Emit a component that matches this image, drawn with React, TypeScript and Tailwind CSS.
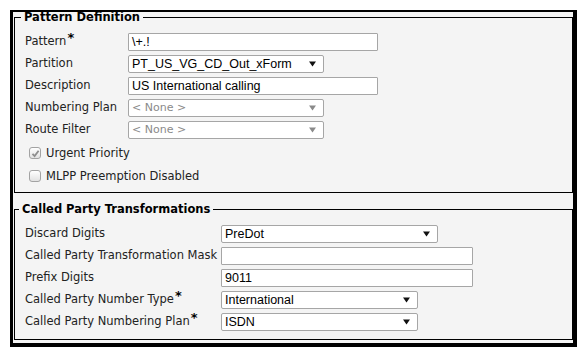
import type { ReactNode } from "react";

const label = "font-['DejaVu_Sans',Verdana,sans-serif] text-[11.5px] leading-[16px] text-[#222]";
const field = "font-['Liberation_Sans',Arial,sans-serif] text-[12.5px] text-black";

function Star() {
  return <span className="relative -top-[3px] ml-[1px] text-[13px] font-bold leading-none text-black">*</span>;
}

function Arrow({ disabled }: { disabled?: boolean }) {
  return (
    <svg width="7" height="6" viewBox="0 0 7 6" className="shrink-0">
      <path d="M0 0.5 L7 0.5 L3.5 5.5 Z" fill={disabled ? "#8a8a8a" : "#111"} />
    </svg>
  );
}

function TextBox({ value, width }: { value: string; width: string }) {
  return (
    <div className={`${width} flex h-[18px] items-center rounded-[1px] border border-[#a6a6a6] bg-white pl-[3px] ${field}`}>
      {value}
    </div>
  );
}

function Select({ value, width, disabled }: { value: string; width: string; disabled?: boolean }) {
  return (
    <div
      className={`${width} flex h-[18px] items-center justify-between rounded-[2px] border border-[#a6a6a6] bg-white pl-[3px] pr-[7px] ${
        disabled ? "font-['DejaVu_Sans',Verdana,sans-serif] text-[11px] text-[#8a8a8a]" : field
      }`}
    >
      <span>{value}</span>
      <Arrow disabled={disabled} />
    </div>
  );
}

function Row({ name, star, col, children }: { name: string; star?: boolean; col: string; children: ReactNode }) {
  return (
    <div className="flex items-start">
      <div className={`${col} ${label}`}>
        {name}
        {star && <Star />}
      </div>
      {children}
    </div>
  );
}

function Check({ checked, text }: { checked?: boolean; text: string }) {
  return (
    <div className="flex h-[20px] items-center pl-[4px]">
      <span className="flex h-[12px] w-[12px] items-center justify-center rounded-[3px] border border-[#a3a3a3] bg-gradient-to-b from-white to-[#e2e2e2]">
        {checked && (
          <svg width="9" height="9" viewBox="0 0 9 9">
            <path d="M1.5 4.8 L3.6 7 L7.6 1.8" fill="none" stroke="#8e8e8e" strokeWidth="1.8" />
          </svg>
        )}
      </span>
      <span className={`ml-[5px] ${label}`}>{text}</span>
    </div>
  );
}

export default function App() {
  return (
    <div className="h-[354px] w-[585px] bg-white pl-[10px] pt-[10px]">
      <div className="h-[337px] w-[567px] border-b-4 border-l-[3px] border-r-4 border-t-2 border-black bg-[#f4f4f4]">
        <fieldset className="ml-[1px] border border-black pb-[6px] pl-[10px]">
          <legend className="-ml-[4px] px-[3px] font-['DejaVu_Sans',Verdana,sans-serif] text-[11.5px] font-bold leading-[10px] text-black">
            Pattern Definition
          </legend>
          <div className="flex flex-col gap-[4px] pt-[11px]">
            <Row name="Pattern" star col="w-[103px]">
              <TextBox value="\+.!" width="w-[250px]" />
            </Row>
            <Row name="Partition" col="w-[103px]">
              <Select value="PT_US_VG_CD_Out_xForm" width="w-[196px]" />
            </Row>
            <Row name="Description" col="w-[103px]">
              <TextBox value="US International calling" width="w-[250px]" />
            </Row>
            <Row name="Numbering Plan" col="w-[103px]">
              <Select value="< None >" width="w-[196px]" disabled />
            </Row>
            <Row name="Route Filter" col="w-[103px]">
              <Select value="< None >" width="w-[196px]" disabled />
            </Row>
          </div>
          <div className="mt-[4px] flex flex-col gap-[3px]">
            <Check checked text="Urgent Priority" />
            <Check text="MLPP Preemption Disabled" />
          </div>
        </fieldset>

        <fieldset className="ml-[1px] mt-[11px] border border-black pb-[8px] pl-[10px]">
          <legend className="-ml-[6px] px-[3px] font-['DejaVu_Sans',Verdana,sans-serif] text-[11.5px] font-bold leading-[10px] text-black">
            Called Party Transformations
          </legend>
          <div className="flex flex-col gap-[4px] pt-[11px]">
            <Row name="Discard Digits" col="w-[196px]">
              <Select value="PreDot" width="w-[217px]" />
            </Row>
            <Row name="Called Party Transformation Mask" col="w-[196px]">
              <TextBox value="" width="w-[252px]" />
            </Row>
            <Row name="Prefix Digits" col="w-[196px]">
              <TextBox value="9011" width="w-[252px]" />
            </Row>
            <Row name="Called Party Number Type" star col="w-[196px]">
              <Select value="International" width="w-[197px]" />
            </Row>
            <Row name="Called Party Numbering Plan" star col="w-[196px]">
              <Select value="ISDN" width="w-[197px]" />
            </Row>
          </div>
        </fieldset>
      </div>
    </div>
  );
}
